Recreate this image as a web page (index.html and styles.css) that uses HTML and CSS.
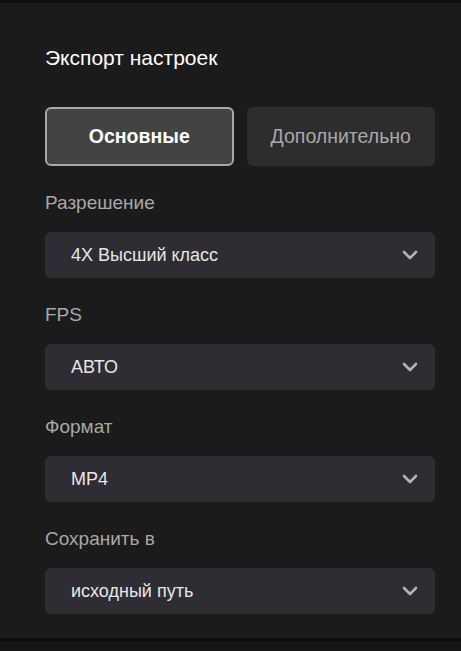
FILE: index.html
```html
<!DOCTYPE html>
<html lang="ru">
<head>
<meta charset="utf-8">
<link rel="stylesheet" href="styles.css">
</head>
<body>
<div class="topbar"></div>
<main class="panel">
  <h1 class="title">Экспорт настроек</h1>
  <div class="tabs">
    <button class="tab active">Основные</button>
    <button class="tab">Дополнительно</button>
  </div>
  <div class="field">
    <div class="label">Разрешение</div>
    <div class="select"><span>4X Высший класс</span><svg class="chev" viewBox="0 0 16 10"><path d="M2 2 L8 8 L14 2" fill="none" stroke="#b4b4b8" stroke-width="2.6" stroke-linecap="round" stroke-linejoin="round"/></svg></div>
  </div>
  <div class="field">
    <div class="label">FPS</div>
    <div class="select"><span>АВТО</span><svg class="chev" viewBox="0 0 16 10"><path d="M2 2 L8 8 L14 2" fill="none" stroke="#b4b4b8" stroke-width="2.6" stroke-linecap="round" stroke-linejoin="round"/></svg></div>
  </div>
  <div class="field">
    <div class="label">Формат</div>
    <div class="select"><span>MP4</span><svg class="chev" viewBox="0 0 16 10"><path d="M2 2 L8 8 L14 2" fill="none" stroke="#b4b4b8" stroke-width="2.6" stroke-linecap="round" stroke-linejoin="round"/></svg></div>
  </div>
  <div class="field">
    <div class="label">Сохранить в</div>
    <div class="select"><span>исходный путь</span><svg class="chev" viewBox="0 0 16 10"><path d="M2 2 L8 8 L14 2" fill="none" stroke="#b4b4b8" stroke-width="2.6" stroke-linecap="round" stroke-linejoin="round"/></svg></div>
  </div>
</main>
<div class="bottomline"></div>
<div class="bottom"></div>
</body>
</html>
```
FILE: styles.css
```css
html, body {
  margin: 0;
  padding: 0;
  background: #1b1b1b;
  font-family: "Liberation Sans", Arial, sans-serif;
  height: 100%;
  overflow: hidden;
}
body {
  display: flex;
  flex-direction: column;
}
.topbar {
  height: 3px;
  background: #0f0f0f;
  flex: none;
}
.panel {
  height: 635px;
  flex: none;
  box-sizing: border-box;
  padding: 43px 26px 0 45px;
  display: flex;
  flex-direction: column;
}
.title {
  margin: 0;
  font-size: 21px;
  line-height: 24px;
  font-weight: normal;
  color: #ffffff;
}
.tabs {
  display: grid;
  grid-template-columns: 1fr 1fr;
  gap: 13px;
  margin-top: 37px;
}
.tab {
  box-sizing: border-box;
  width: 100%;
  min-width: 0;
  height: 59px;
  border-radius: 6px;
  border: none;
  background: #2d2d2d;
  color: #a9a9a9;
  font-family: inherit;
  font-size: 19.5px;
  padding: 0;
}
.tab.active {
  background: #434343;
  border: 2px solid #a8a8a8;
  color: #ffffff;
  font-weight: bold;
}
.field {
  display: flex;
  flex-direction: column;
}
.label {
  color: #a8a8a8;
  font-size: 19px;
  line-height: 24px;
  margin-top: 25px;
  margin-bottom: 17px;
}
.select {
  height: 46px;
  border-radius: 6px;
  background: #2e2d33;
  display: flex;
  align-items: center;
  padding: 0 17px 0 26px;
  color: #e6e6e6;
  font-size: 18px;
}
.select span {
  flex: 1;
}
.chev {
  width: 16px;
  height: 10px;
}
.bottomline {
  height: 3px;
  background: #0d0d0d;
  flex: none;
}
.bottom {
  flex: 1;
  background: #151515;
}
```
